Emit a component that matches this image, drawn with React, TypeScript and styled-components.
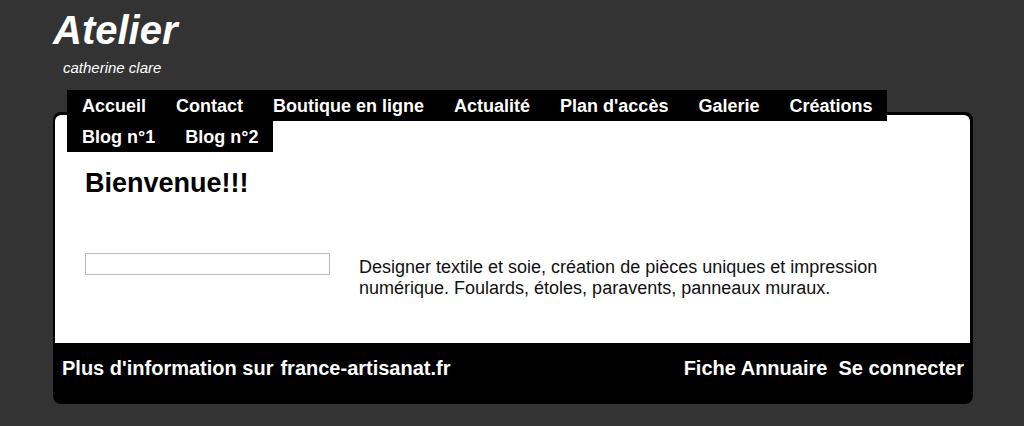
import React from "react";
import styled, { createGlobalStyle } from "styled-components";

const Global = createGlobalStyle`
  html, body { margin: 0; padding: 0; }
  body {
    background: #333333;
    font-family: "Liberation Sans", Arial, sans-serif;
    color: #000;
  }
`;

const Page = styled.div`
  width: 920px;
  padding-left: 53px;
  padding-top: 7px;
`;

const Title = styled.h1`
  margin: 0;
  font-size: 40px;
  font-weight: bold;
  font-style: italic;
  color: #fff;
  line-height: 46px;
`;

const Subtitle = styled.div`
  margin: 6px 0 0 10px;
  font-size: 15px;
  font-style: italic;
  color: #fff;
  line-height: 17px;
`;

const Nav = styled.nav`
  position: relative;
  z-index: 1;
  display: flex;
  flex-wrap: wrap;
  margin: 14px 0 0 14px;
  width: 906px;
`;

const NavItem = styled.a`
  display: block;
  background: #000;
  color: #fff;
  font-size: 18px;
  font-weight: bold;
  line-height: 29px;
  padding: 2px 15px 0;
  text-decoration: none;
`;

const Card = styled.div`
  margin-top: -40px;
  border: 2px solid #000;
  border-top-width: 3px;
  border-right-width: 3px;
  border-radius: 8px;
  overflow: hidden;
  background: #000;
`;

const Content = styled.div`
  background: #fff;
  border-radius: 6px 6px 0 0;
  padding: 53px 30px 0 30px;
  height: 175px;
`;

const Heading = styled.h2`
  margin: 0;
  font-size: 27px;
  font-weight: bold;
  line-height: 31px;
`;

const Row = styled.div`
  display: flex;
  margin-top: 54px;
`;

const Frame = styled.div`
  width: 243px;
  height: 20px;
  border: 1px solid #bdbdbd;
  flex: none;
`;

const Description = styled.p`
  margin: 4px 0 0 29px;
  font-size: 18px;
  line-height: 21px;
  color: #111;
`;

const Footer = styled.footer`
  background: #000;
  height: 59px;
  display: flex;
  justify-content: space-between;
  padding: 14px 6px 0 7px;
  box-sizing: border-box;
`;

const FooterGroup = styled.div<{ $gap: number }>`
  display: flex;
  gap: ${(p) => p.$gap}px;
`;

const FooterLink = styled.a`
  color: #fff;
  font-size: 20px;
  font-weight: bold;
  line-height: 23px;
  text-decoration: none;
`;

export default function App() {
  return (
    <>
      <Global />
      <Page>
        <Title>Atelier</Title>
        <Subtitle>catherine clare</Subtitle>
        <Nav>
          {[
            "Accueil",
            "Contact",
            "Boutique en ligne",
            "Actualité",
            "Plan d'accès",
            "Galerie",
            "Créations",
            "Blog n°1",
            "Blog n°2",
          ].map((l) => (
            <NavItem key={l}>{l}</NavItem>
          ))}
        </Nav>
        <Card>
          <Content>
            <Heading>Bienvenue!!!</Heading>
            <Row>
              <Frame />
              <Description>
                Designer textile et soie, création de pièces uniques et impression numérique. Foulards,
                étoles, paravents, panneaux muraux.
              </Description>
            </Row>
          </Content>
          <Footer>
            <FooterGroup $gap={7}>
              <FooterLink>Plus d'information sur</FooterLink>
              <FooterLink>france-artisanat.fr</FooterLink>
            </FooterGroup>
            <FooterGroup $gap={11}>
              <FooterLink>Fiche Annuaire</FooterLink>
              <FooterLink>Se connecter</FooterLink>
            </FooterGroup>
          </Footer>
        </Card>
      </Page>
    </>
  );
}
